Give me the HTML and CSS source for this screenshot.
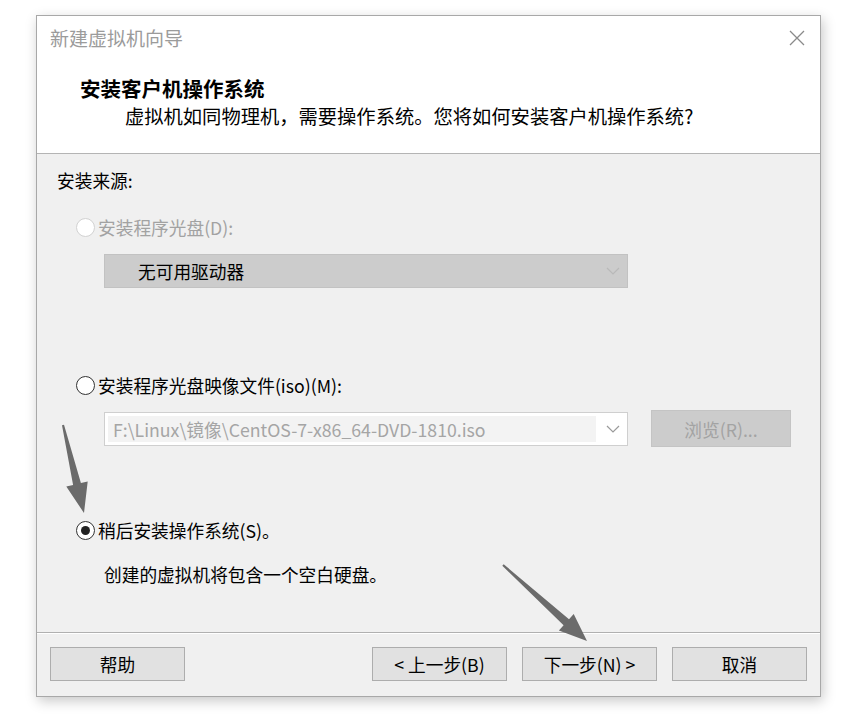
FILE: index.html
```html
<!DOCTYPE html>
<html lang="zh-CN">
<head>
<meta charset="utf-8">
<title>新建虚拟机向导</title>
<link rel="stylesheet" href="styles.css">
</head>
<body>
<div class="dialog">
  <div class="header">
    <div class="titlebar">
      <span class="title">新建虚拟机向导</span>
      <svg class="close" width="16" height="16" viewBox="0 0 16 16"><path d="M1 1 L15 15 M15 1 L1 15" stroke="#8a8a8a" stroke-width="1.3" fill="none"/></svg>
    </div>
    <div class="head-title">安装客户机操作系统</div>
    <div class="head-sub">虚拟机如同物理机，需要操作系统。您将如何安装客户机操作系统?</div>
  </div>
  <div class="content">
    <div class="label">安装来源:</div>
    <div class="radio-row disabled r1"><span class="radio"></span><span>安装程序光盘(D):</span></div>
    <div class="drop">
      <span class="drop-text">无可用驱动器</span>
      <svg class="chev" width="14" height="8" viewBox="0 0 14 8"><path d="M1 1 L7 7 L13 1" stroke="#b9b9b9" stroke-width="1.2" fill="none"/></svg>
    </div>
    <div class="radio-row r2"><span class="radio"></span><span>安装程序光盘映像文件(iso)(M):</span></div>
    <div class="iso-row">
      <div class="combo">
        <span class="combo-text">F:\Linux\镜像\CentOS-7-x86_64-DVD-1810.iso</span>
        <svg class="chev" width="14" height="8" viewBox="0 0 14 8"><path d="M1 1 L7 7 L13 1" stroke="#9a9a9a" stroke-width="1.2" fill="none"/></svg>
      </div>
      <div class="browse">浏览(R)...</div>
    </div>
    <div class="radio-row checked r3"><span class="radio"></span><span>稍后安装操作系统(S)。</span></div>
    <div class="desc">创建的虚拟机将包含一个空白硬盘。</div>
  </div>
  <div class="footer">
    <div class="btn">帮助</div>
    <div class="spacer"></div>
    <div class="btn">&lt; 上一步(B)</div>
    <div class="btn">下一步(N) &gt;</div>
    <div class="btn">取消</div>
  </div>
</div>
<svg class="arrows" width="843" height="722" viewBox="0 0 843 722">
  <polygon fill="#6b6b6b" points="62,425.2 64,424.8 80.9,483.1 87.7,481.4 84,513 66.3,486.6 73.1,484.9"/>
  <polygon fill="#6b6b6b" points="502.3,565.7 503.7,564.3 569,619.2 573.7,614 587,641 558.9,630.4 563.6,625.2"/>
</svg>
</body>
</html>
```

FILE: styles.css
```css
html, body {
  margin: 0;
  padding: 0;
  background: #ffffff;
}
body {
  width: 843px;
  height: 722px;
  position: relative;
  overflow: hidden;
  font-family: "Noto Sans CJK SC", "Noto Sans", sans-serif;
  color: #000;
}
.dialog {
  margin: 15px 0 0 36px;
  width: 783px;
  height: 680px;
  border: 1px solid #a8a8a8;
  box-shadow: 2px 4px 12px rgba(0,0,0,0.22);
  background: #f0f0f0;
  display: flex;
  flex-direction: column;
}
.header {
  background: #ffffff;
  height: 137px;
  border-bottom: 1px solid #b4b4b4;
  display: flex;
  flex-direction: column;
}
.titlebar {
  height: 46px;
  display: flex;
  align-items: center;
  justify-content: space-between;
  padding: 0 15px 0 13px;
}
.title {
  font-size: 19px;
  color: #9b9b9b;
  line-height: 44px;
  margin-top: -3px;
}
.close {
  display: block;
  margin-top: -3px;
}
.head-title {
  margin-top: 13px;
  padding-left: 43px;
  font-size: 20.5px;
  font-weight: bold;
  line-height: 26px;
  color: #000;
}
.head-sub {
  margin-top: 2px;
  padding-left: 88px;
  font-size: 19.3px;
  line-height: 26px;
  color: #000;
}
.content {
  height: 478px;
  padding: 14px 0 0 20px;
  box-sizing: border-box;
  display: flex;
  flex-direction: column;
  font-size: 17.7px;
}
.label {
  line-height: 24px;
}
.radio-row {
  display: flex;
  align-items: center;
  gap: 3px;
  margin-left: 19px;
  line-height: 24px;
}
.r1 { margin-top: 23px; }
.r2 { margin-top: 85px; }
.r3 { margin-top: 71px; }
.radio {
  width: 17px;
  height: 17px;
  border: 1.5px solid #333;
  border-radius: 50%;
  background: #fff;
  display: flex;
  align-items: center;
  justify-content: center;
}
.disabled {
  color: #a2a2a2;
}
.disabled .radio {
  border-color: #d2d2d2;
}
.checked .radio::after {
  content: "";
  width: 9px;
  height: 9px;
  border-radius: 50%;
  background: #222;
}
.drop {
  margin: 15px 0 0 47px;
  height: 32px;
  width: 482px;
  background: #cccccc;
  border: 1px solid #c2c2c2;
  display: flex;
  align-items: center;
  justify-content: space-between;
  padding: 0 7px 0 33px;
}
.drop-text {
  color: #000;
}
.iso-row {
  margin: 13px 0 0 47px;
  display: flex;
  align-items: center;
  gap: 23px;
}
.combo {
  width: 515px;
  height: 32px;
  border: 1px solid #cfcfcf;
  background: #ffffff;
  display: flex;
  align-items: center;
  justify-content: space-between;
  padding: 0 7px 0 0;
}
.combo-text {
  align-self: stretch;
  margin: 3px 0 3px 3px;
  width: 488px;
  padding-left: 5px;
  box-sizing: border-box;
  background: #f3f3f3;
  color: #a5a5a5;
  line-height: 26px;
  white-space: nowrap;
  overflow: hidden;
}
.browse {
  width: 138px;
  height: 35px;
  background: #cccccc;
  border: 1px solid #c4c4c4;
  color: #a3a3a3;
  display: flex;
  align-items: center;
  justify-content: center;
}
.desc {
  margin: 20px 0 0 47px;
  line-height: 24px;
}
.footer {
  flex: 1;
  border-top: 1px solid #b0b0b0;
  box-shadow: inset 0 1px 0 #ffffff;
  display: flex;
  align-items: flex-start;
  padding: 14px 13px 0 13px;
  gap: 15px;
}
.spacer {
  flex: 1;
}
.btn {
  width: 133px;
  height: 32px;
  background: #e1e1e1;
  border: 1px solid #adadad;
  display: flex;
  align-items: center;
  justify-content: center;
  font-size: 17.7px;
  color: #000;
}
.arrows {
  position: absolute;
  left: 0;
  top: 0;
  pointer-events: none;
}
```
